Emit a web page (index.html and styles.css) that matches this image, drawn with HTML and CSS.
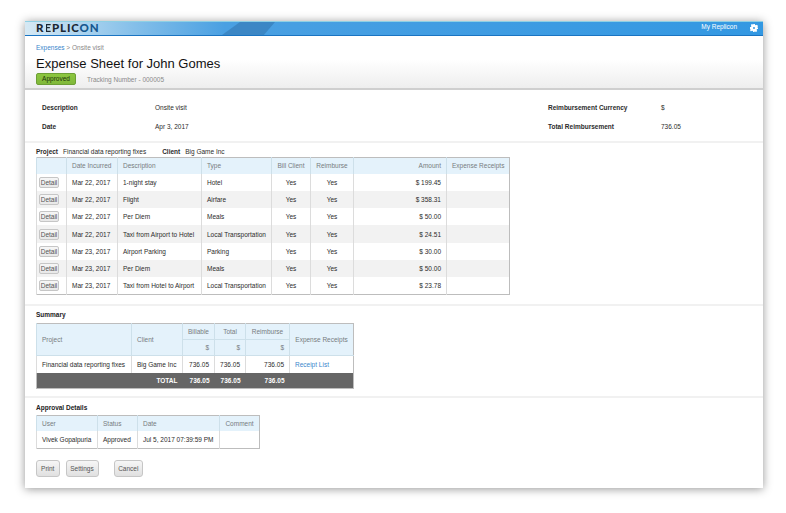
FILE: index.html
```html
<!DOCTYPE html>
<html lang="en">
<head>
<meta charset="utf-8">
<title>Expense Sheet for John Gomes</title>
<link rel="stylesheet" href="styles.css">
</head>
<body>
<div class="sheet">
  <header class="topbar">
    <div class="logo">R<span class="logo-e">E</span>PLIC<span class="logo-on">ON</span></div>
    <div class="top-right">
      <span class="my">My Replicon</span>
      <svg class="gear" viewBox="0 0 10 10" width="8" height="8"><path fill="#fff" fill-rule="evenodd" d="M3.9 0h2.2l.3 1.3 1 .4L8.6 1 10 2.4l-.7 1.2.4 1L10 5v1.1l-1.3.3-.4 1 .7 1.2L7.6 10l-1.2-.7-1 .4L5 10h-1l-.4-1.3-1-.4-1.2.7L0 8.6l.7-1.2-.4-1L0 6V3.9l1.3-.3.4-1L1 1.4 2.4 0l1.2.7 1-.4zM5 3.8a1.2 1.2 0 1 0 0 2.4 1.2 1.2 0 0 0 0-2.4z"/></svg>
    </div>
  </header>
  <section class="title-area">
    <div class="crumbs"><a class="link">Expenses</a> &gt; Onsite visit</div>
    <h1>Expense Sheet for John Gomes</h1>
    <div class="status-row">
      <span class="badge">Approved</span>
      <span class="tracking">Tracking Number - 000005</span>
    </div>
  </section>
  <section class="meta">
    <div class="meta-col">
      <div class="meta-row"><b class="k1">Description</b><span>Onsite visit</span></div>
      <div class="meta-row"><b class="k1">Date</b><span>Apr 3, 2017</span></div>
    </div>
    <div class="meta-col right">
      <div class="meta-row"><b class="k2">Reimbursement Currency</b><span>$</span></div>
      <div class="meta-row"><b class="k2">Total Reimbursement</b><span>736.05</span></div>
    </div>
  </section>
  <section class="block project">
    <div class="proj-line"><b>Project</b><span class="pv">Financial data reporting fixes</span><b>Client</b><span class="pv">Big Game Inc</span></div>
    <table class="grid expenses">
      <colgroup><col class="e1"><col class="e2"><col class="e3"><col class="e4"><col class="e5"><col class="e6"><col class="e7"><col class="e8"></colgroup>
      <thead><tr><th></th><th>Date Incurred</th><th>Description</th><th>Type</th><th class="c">Bill Client</th><th class="c">Reimburse</th><th class="r">Amount</th><th class="c">Expense Receipts</th></tr></thead>
      <tbody>
        <tr><td class="d"><button class="detail">Detail</button></td><td>Mar 22, 2017</td><td>1-night stay</td><td>Hotel</td><td class="c">Yes</td><td class="c">Yes</td><td class="r">$ 199.45</td><td></td></tr>
        <tr><td class="d"><button class="detail">Detail</button></td><td>Mar 22, 2017</td><td>Flight</td><td>Airfare</td><td class="c">Yes</td><td class="c">Yes</td><td class="r">$ 358.31</td><td></td></tr>
        <tr><td class="d"><button class="detail">Detail</button></td><td>Mar 22, 2017</td><td>Per Diem</td><td>Meals</td><td class="c">Yes</td><td class="c">Yes</td><td class="r">$ 50.00</td><td></td></tr>
        <tr><td class="d"><button class="detail">Detail</button></td><td>Mar 22, 2017</td><td>Taxi from Airport to Hotel</td><td>Local Transportation</td><td class="c">Yes</td><td class="c">Yes</td><td class="r">$ 24.51</td><td></td></tr>
        <tr><td class="d"><button class="detail">Detail</button></td><td>Mar 23, 2017</td><td>Airport Parking</td><td>Parking</td><td class="c">Yes</td><td class="c">Yes</td><td class="r">$ 30.00</td><td></td></tr>
        <tr><td class="d"><button class="detail">Detail</button></td><td>Mar 23, 2017</td><td>Per Diem</td><td>Meals</td><td class="c">Yes</td><td class="c">Yes</td><td class="r">$ 50.00</td><td></td></tr>
        <tr><td class="d"><button class="detail">Detail</button></td><td>Mar 23, 2017</td><td>Taxi from Hotel to Airport</td><td>Local Transportation</td><td class="c">Yes</td><td class="c">Yes</td><td class="r">$ 23.78</td><td></td></tr>
      </tbody>
    </table>
  </section>
  <section class="block summary">
    <h2>Summary</h2>
    <table class="grid sum">
      <colgroup><col class="s1"><col class="s2"><col class="s3"><col class="s4"><col class="s5"><col class="s6"></colgroup>
      <thead>
        <tr><th rowspan="2">Project</th><th rowspan="2">Client</th><th class="c">Billable</th><th class="c">Total</th><th class="c">Reimburse</th><th rowspan="2" class="c">Expense Receipts</th></tr>
        <tr><th class="r">$</th><th class="r">$</th><th class="r">$</th></tr>
      </thead>
      <tbody>
        <tr><td>Financial data reporting fixes</td><td>Big Game Inc</td><td class="r">736.05</td><td class="r">736.05</td><td class="r">736.05</td><td><a class="link">Receipt List</a></td></tr>
      </tbody>
      <tfoot>
        <tr><td colspan="2" class="r">TOTAL</td><td class="r">736.05</td><td class="r">736.05</td><td class="r">736.05</td><td></td></tr>
      </tfoot>
    </table>
  </section>
  <section class="approval">
    <h2>Approval Details</h2>
    <table class="grid appr">
      <colgroup><col class="a1"><col class="a2"><col class="a3"><col class="a4"></colgroup>
      <thead><tr><th>User</th><th>Status</th><th>Date</th><th class="c">Comment</th></tr></thead>
      <tbody><tr><td>Vivek Gopalpuria</td><td>Approved</td><td>Jul 5, 2017 07:39:59 PM</td><td></td></tr></tbody>
    </table>
    <div class="actions">
      <button class="btn print">Print</button>
      <button class="btn settings">Settings</button>
      <button class="btn cancel">Cancel</button>
    </div>
  </section>
</div>
</body>
</html>
```
FILE: styles.css
```css
* { box-sizing: border-box; }
html, body { margin: 0; padding: 0; background: #fff; }
body {
  width: 786px;
  height: 513px;
  overflow: hidden;
  padding: 21px 23px 0 25px;
  font-family: "Liberation Sans", Arial, sans-serif;
  font-size: 6.5px;
  color: #2b2b2b;
}
.sheet {
  height: 467px;
  background: #fff;
  box-shadow: 0 1px 9px rgba(0, 0, 0, .42);
}
.topbar {
  position: relative;
  height: 15px;
  display: flex;
  justify-content: space-between;
  padding: 0 5px 0 11px;
  border-top: 1px solid #8fd0e4;
  border-bottom: 1px solid #1a74c2;
  background: linear-gradient(90deg, #d6e9f4 0, #84bfe9 110px, #4aa0e2 200px, #3398e2 100%);
}
.topbar::after {
  content: "";
  position: absolute;
  left: 197px;
  top: 0;
  width: 53px;
  height: 100%;
  clip-path: polygon(34% 0, 100% 0, 79% 100%, 0 100%);
  background: rgba(30, 80, 130, .3);
}
.logo {
  font-family: "Lato", "Liberation Sans", sans-serif;
  font-size: 11.5px;
  line-height: 12px;
  font-weight: 900;
  letter-spacing: .9px;
  color: #1b2833;
}
.logo-e {
  background: linear-gradient(90deg, transparent 24%, #1b2833 24%);
  -webkit-background-clip: text;
  background-clip: text;
  color: transparent;
}
.logo-on { color: #15588f; }
.top-right { display: flex; align-items: flex-start; gap: 13px; color: #fff; }
.my { line-height: 10px; }
.gear { margin-top: 2px; }
.title-area {
  height: 54px;
  padding: 8px 11px 0;
  border-bottom: 2px solid #cfcfcf;
  background: linear-gradient(#fff 45%, #eeeeee);
}
.crumbs { color: #888; line-height: 8px; }
.link { color: #3a86cc; }
h1 {
  margin: 3px 0 0;
  font-size: 13px;
  line-height: 17px;
  font-weight: 400;
  color: #111;
}
.status-row { display: flex; align-items: center; margin-top: 1px; }
.badge {
  width: 40px;
  height: 12px;
  line-height: 10px;
  text-align: center;
  border: 1px solid #6d9f35;
  border-radius: 2px;
  background: linear-gradient(#8cc63f, #80b83a);
  color: #20340a;
}
.tracking { margin-left: 11px; color: #8a8a8a; }
.meta {
  height: 53px;
  display: flex;
  padding: 0 0 0 17px;
  border-bottom: 2px solid #f1f1f1;
}
.meta-col { width: 506px; padding-top: 14px; }
.meta-col.right { width: auto; }
.meta-row { display: flex; line-height: 8px; margin-bottom: 11px; }
.k1 { width: 113px; }
.k2 { width: 113px; }
.block { padding: 0 11px; border-bottom: 2px solid #f1f1f1; }
.project { height: 163px; padding-top: 5px; }
.proj-line { line-height: 8px; margin-bottom: 1px; }
.pv { margin: 0 16px 0 5px; }
.grid {
  border-collapse: collapse;
  table-layout: fixed;
  border: 1px solid #bdbdbd;
  border-bottom-width: 1.5px;
  background: #fff;
}
.grid th, .grid td {
  padding: 0 5px;
  font-weight: 400;
  text-align: left;
  overflow: hidden;
  white-space: nowrap;
  border-left: 1px solid #dcdcdc;
}
.grid th {
  background: #e4f2fb;
  color: #777c80;
  border-left-color: #cde0ea;
  height: 16px;
}
.grid .c { text-align: center; }
.grid .r { text-align: right; }
.expenses { width: 473px; }
.expenses td { height: 17.3px; }
.expenses tbody tr:nth-child(even) td { background: #f2f2f2; }
.grid td.d { padding: 0 0 0 2px; }
.e1 { width: 30px; } .e2 { width: 51px; } .e3 { width: 84px; } .e4 { width: 70px; }
.e5 { width: 39px; } .e6 { width: 43px; } .e7 { width: 93px; } .e8 { width: 63px; }
.detail {
  display: block;
  width: 20px;
  height: 11px;
  padding: 0;
  font: 6.5px "Liberation Sans", Arial, sans-serif;
  color: #555;
  border: 1px solid #c6c6c6;
  border-radius: 2px;
  background: linear-gradient(#f6f6f6, #e8e8e8);
}
h2 { margin: 0; font-size: 6.5px; line-height: 8px; font-weight: 700; color: #222; }
.summary { height: 92px; padding-top: 5px; }
.sum { width: 317px; margin-top: 4px; }
.sum th { height: 16px; border-bottom: 1px solid #cde0ea; }
.sum tbody td { height: 17.5px; }
.sum tfoot td {
  height: 15px;
  background: #666;
  color: #fff;
  font-weight: 700;
  border-left: 0;
}
.s1 { width: 95px; } .s2 { width: 51px; } .s3 { width: 32px; }
.s4 { width: 31px; } .s5 { width: 44px; } .s6 { width: 64px; }
.approval { padding: 6px 11px 0; }
.appr { width: 223px; margin-top: 3px; }
.appr th { height: 15px; }
.appr td { height: 18px; }
.a1 { width: 61px; } .a2 { width: 40px; } .a3 { width: 82px; } .a4 { width: 40px; }
.actions { display: flex; gap: 6px; margin-top: 11px; }
.btn {
  height: 17px;
  padding: 0;
  font: 6.5px "Liberation Sans", Arial, sans-serif;
  color: #555;
  border: 1px solid #c6c6c6;
  border-radius: 3px;
  background: linear-gradient(#f6f6f6, #e0e0e0);
}
.print { width: 23.5px; }
.settings { width: 33px; }
.cancel { width: 29.5px; margin-left: 9px; }
```
